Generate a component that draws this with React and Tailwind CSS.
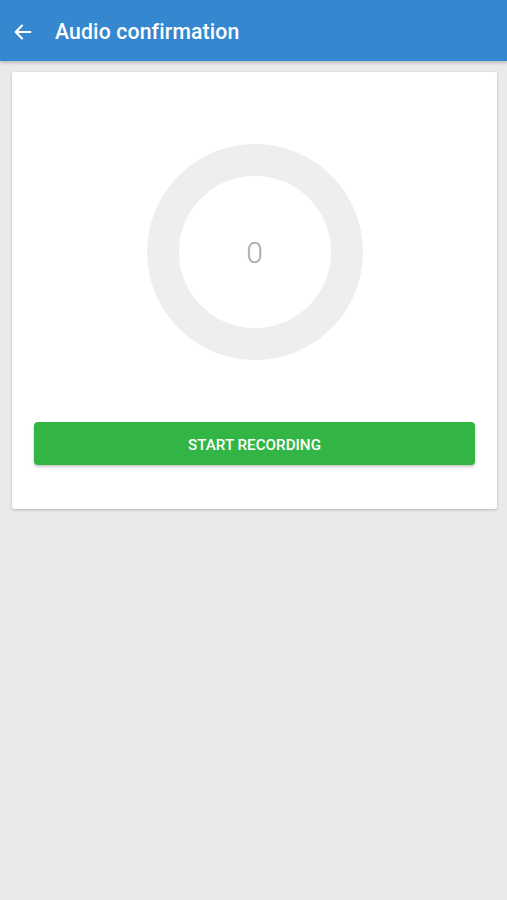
export default function App() {
  return (
    <div
      className="min-h-[900px] w-full bg-[#ebe9ea]"
      style={{ fontFamily: "Roboto, 'Liberation Sans', sans-serif" }}
    >
      {/* top bar */}
      <header className="flex h-[61px] items-center bg-[#3588cf] shadow-[0_2px_3px_rgba(0,0,0,0.2)]">
        <button className="ml-[11px] mt-[2px] flex h-6 w-6 items-center justify-center text-white">
          <svg width="22" height="22" viewBox="0 0 24 24" fill="none">
            <path
              d="M20 12H4.5M11 5l-7 7 7 7"
              stroke="currentColor"
              strokeWidth="2.4"
              strokeLinecap="round"
              strokeLinejoin="round"
            />
          </svg>
        </button>
        <h1 className="ml-[20px] mt-[2px] text-[21.2px] font-medium tracking-[0.15px] text-white">
          Audio confirmation
        </h1>
      </header>

      <div className="pl-[12px] pr-[10px] pt-[11px]">
        <div className="flex flex-col items-center rounded-[2px] bg-white px-[22px] pb-[44px] pt-[72px] shadow-[0_1px_3px_rgba(0,0,0,0.22)]">
          <div className="flex h-[216px] w-[216px] items-center justify-center rounded-full border-[32px] border-[#eeeeee]">
            <span className="text-[30px] font-light text-[#a8a8a8]">0</span>
          </div>

          <button className="mt-[62px] h-[43px] w-full rounded-[4px] bg-[#33b546] pt-[3px] text-[15.2px] font-medium text-white shadow-[0_2px_3px_rgba(0,0,0,0.22)]">
            START RECORDING
          </button>
        </div>
      </div>
    </div>
  );
}
